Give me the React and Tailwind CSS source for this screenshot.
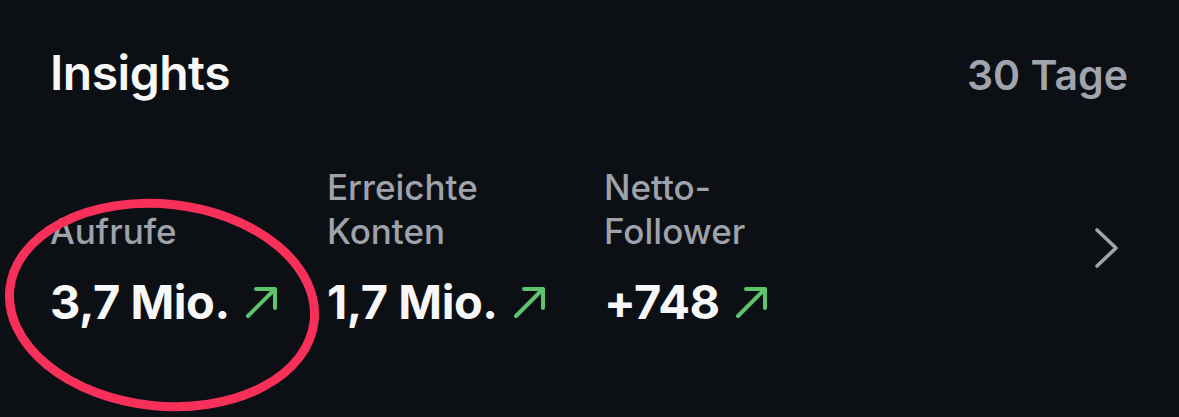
function UpArrow() {
  return (
    <svg width="36" height="36" viewBox="0 0 36 36" fill="none" className="shrink-0">
      <path
        d="M4 32 L31 5 M12 5 H31 V24"
        stroke="#5ec36d"
        strokeWidth="4"
        strokeLinecap="round"
        strokeLinejoin="round"
      />
    </svg>
  );
}

function Chevron() {
  return (
    <svg width="28" height="44" viewBox="0 0 28 44" fill="none">
      <path
        d="M4 4 L23 22 L4 40"
        stroke="#a0a4ad"
        strokeWidth="3.6"
        strokeLinecap="round"
        strokeLinejoin="round"
      />
    </svg>
  );
}

const stats = [
  { label: ["Aufrufe"], value: "3,7 Mio." },
  { label: ["Erreichte", "Konten"], value: "1,7 Mio." },
  { label: ["Netto-", "Follower"], value: "+748" },
];

export default function App() {
  return (
    <div className="relative w-[1179px] h-[417px] overflow-hidden bg-[#0c0f14] font-['Inter','Liberation_Sans',sans-serif]">
      {/* header */}
      <div className="flex items-baseline justify-between pl-[50px] pr-[51px] pt-[45px]">
        <h1 className="text-[48px] leading-[56px] font-semibold text-[#f7f7f8] tracking-[-0.01em]">
          Insights
        </h1>
        <span className="text-[41px] leading-[48px] font-semibold text-[#a0a4ad]">30 Tage</span>
      </div>

      {/* stats */}
      <div className="flex items-center pl-[50px] pr-[58px] mt-[64px]">
        <div className="flex flex-1">
          {stats.map((s) => (
            <div key={s.value} className="w-[277px] flex flex-col">
              <div className="h-[88px] flex flex-col justify-end text-[35px] leading-[44px] font-medium text-[#9ea2ab]">
                {s.label.map((l) => (
                  <span key={l}>{l}</span>
                ))}
              </div>
              <div className="mt-[21px] flex items-center gap-[14px]">
                <span className="text-[47px] leading-[56px] font-bold text-[#f7f7f8] tracking-[-0.01em]">
                  {s.value}
                </span>
                <UpArrow />
              </div>
            </div>
          ))}
        </div>
        <Chevron />
      </div>

      {/* red annotation circle */}
      <svg
        className="absolute left-0 top-0 pointer-events-none"
        width="1179"
        height="417"
        viewBox="0 0 1179 417"
      >
        <ellipse
          cx="162"
          cy="305"
          rx="153"
          ry="101"
          transform="rotate(6 162 305)"
          fill="none"
          stroke="#f7305a"
          strokeWidth="9"
        />
      </svg>
    </div>
  );
}
